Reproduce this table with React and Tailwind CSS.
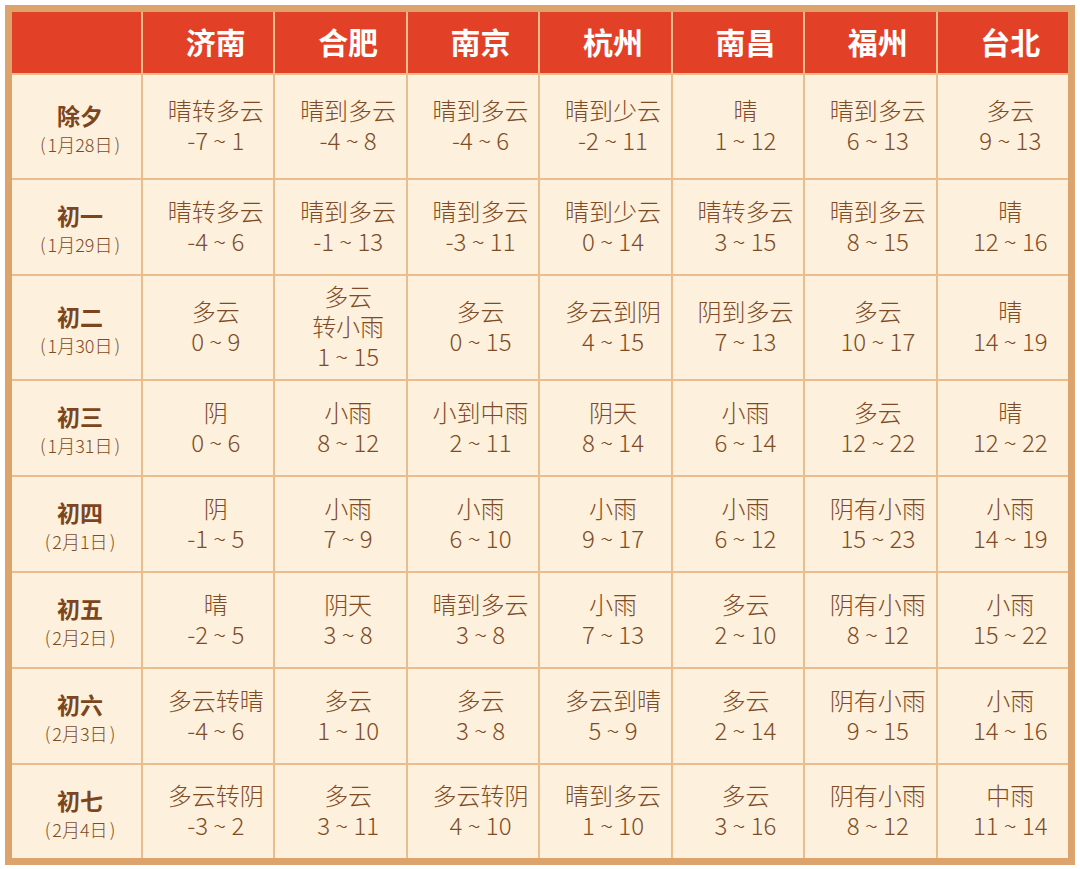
import React from "react";

const cities = ["济南", "合肥", "南京", "杭州", "南昌", "福州", "台北"];

const rows = [
  ["除夕", "1月28日", [["晴转多云", "-7 ~ 1"], ["晴到多云", "-4 ~ 8"], ["晴到多云", "-4 ~ 6"], ["晴到少云", "-2 ~ 11"], ["晴", "1 ~ 12"], ["晴到多云", "6 ~ 13"], ["多云", "9 ~ 13"]]],
  ["初一", "1月29日", [["晴转多云", "-4 ~ 6"], ["晴到多云", "-1 ~ 13"], ["晴到多云", "-3 ~ 11"], ["晴到少云", "0 ~ 14"], ["晴转多云", "3 ~ 15"], ["晴到多云", "8 ~ 15"], ["晴", "12 ~ 16"]]],
  ["初二", "1月30日", [["多云", "0 ~ 9"], ["多云", "转小雨", "1 ~ 15"], ["多云", "0 ~ 15"], ["多云到阴", "4 ~ 15"], ["阴到多云", "7 ~ 13"], ["多云", "10 ~ 17"], ["晴", "14 ~ 19"]]],
  ["初三", "1月31日", [["阴", "0 ~ 6"], ["小雨", "8 ~ 12"], ["小到中雨", "2 ~ 11"], ["阴天", "8 ~ 14"], ["小雨", "6 ~ 14"], ["多云", "12 ~ 22"], ["晴", "12 ~ 22"]]],
  ["初四", "2月1日", [["阴", "-1 ~ 5"], ["小雨", "7 ~ 9"], ["小雨", "6 ~ 10"], ["小雨", "9 ~ 17"], ["小雨", "6 ~ 12"], ["阴有小雨", "15 ~ 23"], ["小雨", "14 ~ 19"]]],
  ["初五", "2月2日", [["晴", "-2 ~ 5"], ["阴天", "3 ~ 8"], ["晴到多云", "3 ~ 8"], ["小雨", "7 ~ 13"], ["多云", "2 ~ 10"], ["阴有小雨", "8 ~ 12"], ["小雨", "15 ~ 22"]]],
  ["初六", "2月3日", [["多云转晴", "-4 ~ 6"], ["多云", "1 ~ 10"], ["多云", "3 ~ 8"], ["多云到晴", "5 ~ 9"], ["多云", "2 ~ 14"], ["阴有小雨", "9 ~ 15"], ["小雨", "14 ~ 16"]]],
  ["初七", "2月4日", [["多云转阴", "-3 ~ 2"], ["多云", "3 ~ 11"], ["多云转阴", "4 ~ 10"], ["晴到多云", "1 ~ 10"], ["多云", "3 ~ 16"], ["阴有小雨", "8 ~ 12"], ["中雨", "11 ~ 14"]]],
];

export default function App() {
  return (
    <div
      className="w-[1080px] h-[869px] bg-white pt-[5px] pl-[5px]"
      style={{ fontFamily: '"Noto Sans CJK SC", "Noto Sans", sans-serif' }}
    >
      <div className="w-[1070px] border-[7px] border-[#dca36d] bg-[#ebbd8c]">
        <div className="grid grid-cols-[129px_repeat(7,1fr)] grid-rows-[61px_103px_94px_103px_94px_94px_94px_94px_93px] gap-[2px]">
          <div className="bg-[#e24128]" />
          {cities.map((c) => (
            <div
              key={c}
              className="bg-[#e24128] flex items-center justify-center pl-[15px] pb-[3px] text-white font-bold text-[30px] leading-none"
            >
              {c}
            </div>
          ))}
          {rows.map(([label, date, cells]) => (
            <React.Fragment key={label}>
              <div className="bg-[#fdf0dc] flex flex-col items-center justify-center pl-[7px] pt-[2px] text-[#7a4520]">
                <div className="font-bold text-[23px] leading-[32px]">{label}</div>
                <div className="text-[18px] leading-[26px] font-light text-[#7d4c27] whitespace-nowrap">
                  <span className="mr-[2px]">(</span>
                  {date}
                  <span className="ml-[2px]">)</span>
                </div>
              </div>
              {cells.map((lines, i) => (
                <div
                  key={i}
                  className="bg-[#fdf0dc] flex flex-col items-center justify-center pl-[15px] pb-[3px] font-light text-[#7d4c27] text-[24px] leading-[30px]"
                >
                  {lines.map((l, j) => (
                    <div key={j} className="whitespace-nowrap">{l}</div>
                  ))}
                </div>
              ))}
            </React.Fragment>
          ))}
        </div>
      </div>
    </div>
  );
}
